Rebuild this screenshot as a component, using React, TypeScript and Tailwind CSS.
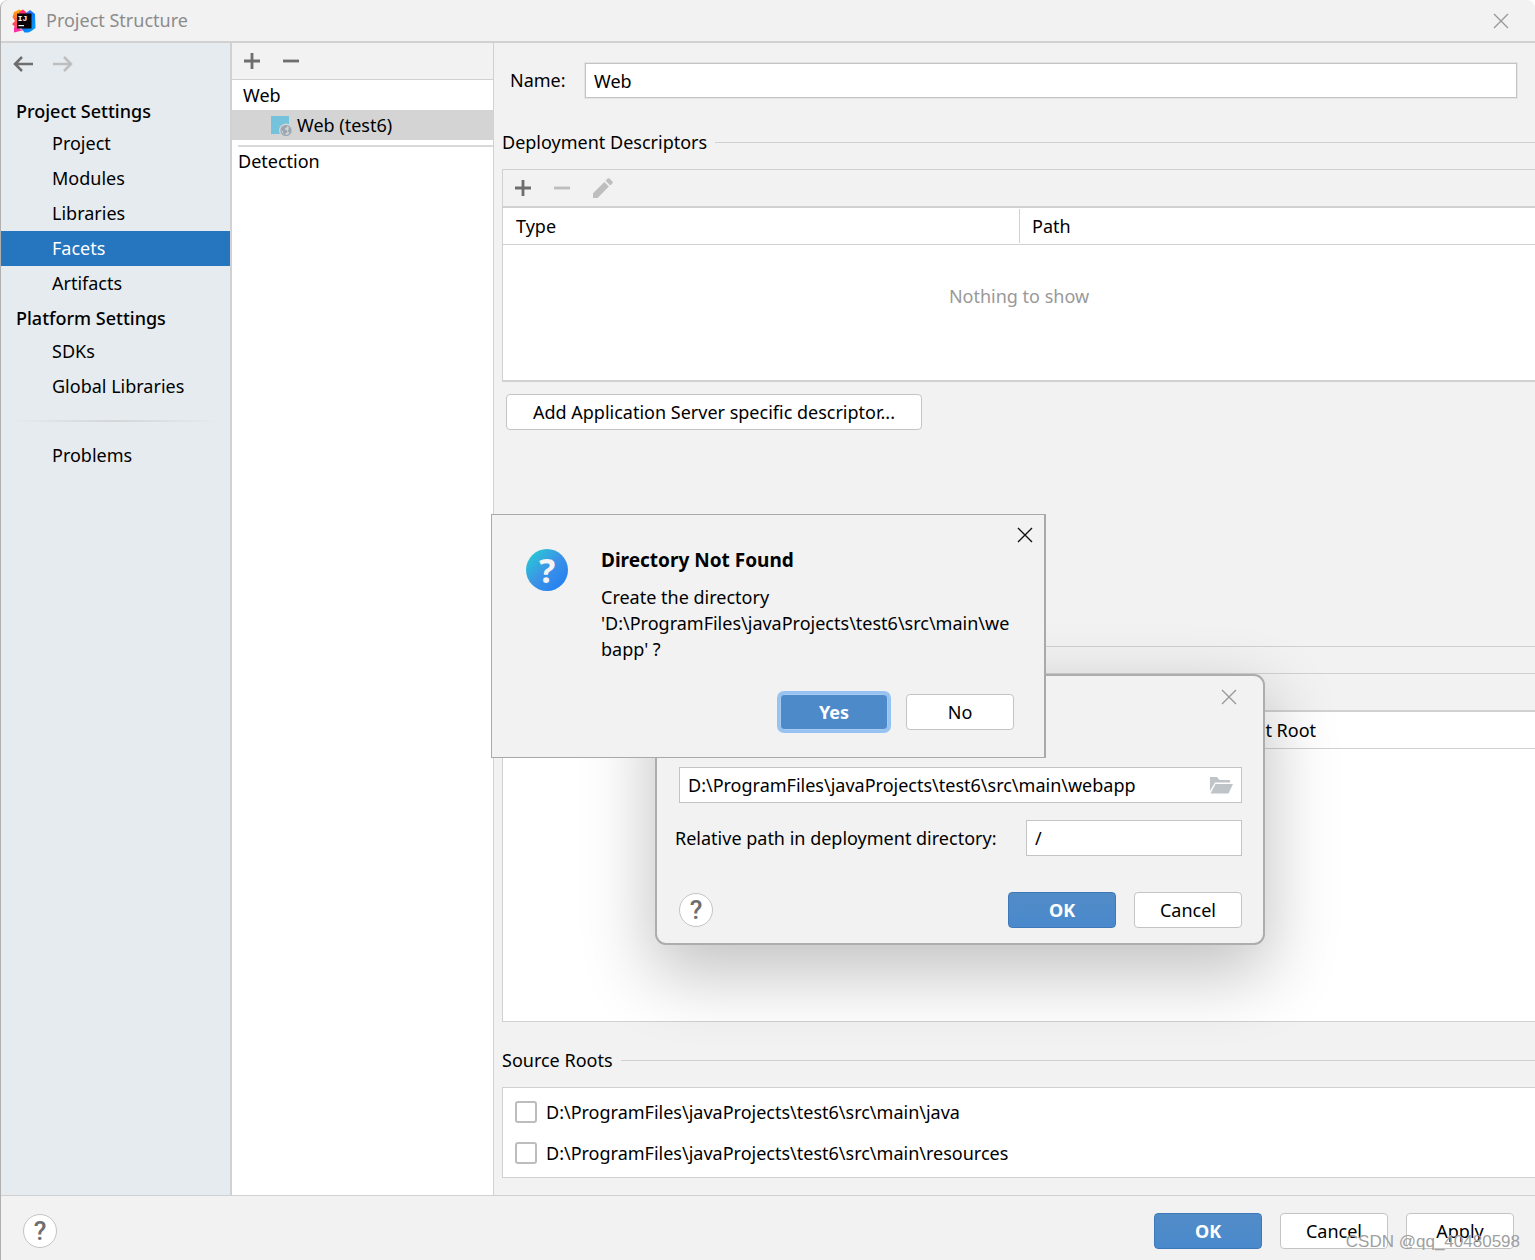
import { useState } from "react";
import type { ReactNode } from "react";

const projectSettings = ["Project", "Modules", "Libraries", "Facets", "Artifacts"];
const platformSettings = ["SDKs", "Global Libraries"];
const sourceRoots = [
  "D:\\ProgramFiles\\javaProjects\\test6\\src\\main\\java",
  "D:\\ProgramFiles\\javaProjects\\test6\\src\\main\\resources",
];

function IdeaLogo() {
  return (
    <svg width="24" height="24" viewBox="0 0 24 24" aria-hidden="true">
      <defs>
        <linearGradient id="ideaLeft" x1="0" y1="0" x2="0" y2="1">
          <stop offset="0" stopColor="#fdb60d" />
          <stop offset="0.45" stopColor="#ff5a3c" />
          <stop offset="1" stopColor="#fe2ea0" />
        </linearGradient>
        <linearGradient id="ideaRight" x1="0" y1="0" x2="1" y2="1">
          <stop offset="0" stopColor="#6b57ff" />
          <stop offset="0.5" stopColor="#087cfa" />
          <stop offset="1" stopColor="#07a5f5" />
        </linearGradient>
      </defs>
      <path d="M2 3l5-2.500 5 2 1 8-6 10-5 2.500 1-5-3-3 3-3-2.500-4z" fill="url(#ideaLeft)" />
      <path d="M7 3l4-2.500L14 3l1 3H8z" fill="#fe2d6b" />
      <path d="M14 4l4-3 5 4 .5 14-4 3-3 1.500h-4l-3-4z" fill="url(#ideaRight)" />
      <path d="M2 18l5 2 5 1-10 2.500z" fill="#fe2ea0" />
      <rect x="5" y="4.500" width="14.500" height="15" fill="#0a0406" />
      <rect x="6.500" y="16" width="5.500" height="1.200" fill="#fff" />
      <text x="5.800" y="12" fontSize="8" fontWeight="700" fontFamily="Liberation Mono, monospace" fill="#fff">
        IJ
      </text>
    </svg>
  );
}

function CloseIcon() {
  return (
    <svg width="16" height="16" viewBox="0 0 16 16" stroke="currentColor" strokeWidth="1.400" aria-hidden="true">
      <path d="M1 1l14 14M15 1L1 15" />
    </svg>
  );
}

function PlusIcon() {
  return (
    <svg width="16" height="16" viewBox="0 0 16 16" fill="currentColor" aria-hidden="true">
      <path d="M6.600 0h2.800v6.600H16v2.800H9.400V16H6.600V9.400H0V6.600h6.600z" />
    </svg>
  );
}

function MinusIcon() {
  return (
    <svg width="16" height="16" viewBox="0 0 16 16" fill="currentColor" aria-hidden="true">
      <path d="M0 6.600h16v2.800H0z" />
    </svg>
  );
}

function ArrowIcon({ className }: { className?: string }) {
  return (
    <svg width="20" height="16" viewBox="0 0 20 16" fill="none" stroke="currentColor" strokeWidth="2.500" className={className} aria-hidden="true">
      <path d="M20 8H2M9 1L2 8l7 7" />
    </svg>
  );
}

function PencilIcon() {
  return (
    <svg width="20" height="20" viewBox="0 0 20 20" fill="currentColor" aria-hidden="true">
      <path d="M0 15.300L11.300 4l4.600 4.600L4.600 20H0zM12.600 2.700L14.700.6q.9-.9 1.800 0l2.900 2.900q.9.9 0 1.800l-2.100 2.100z" />
    </svg>
  );
}

function FacetIcon() {
  return (
    <svg width="22" height="22" viewBox="0 0 22 22" aria-hidden="true">
      <path d="M0 2h18v18H0z" fill="#74c2dc" />
      <circle cx="15" cy="16.500" r="7" fill="#d4d4d4" />
      <circle cx="15" cy="16.500" r="5" fill="#d4d4d4" stroke="#9aa7b0" strokeWidth="1.200" />
      <path d="M10 15.500l2-3.500 3.500-.5.8 1.500-2 1.200-.6 1.300 2.300.8.500 1.700-2 1.500-.3 1.800-1.700-1.300-.5-2.500z" fill="#9aa7b0" />
      <path d="M17.800 13.200l2 2v2.300l-1.500 1.500-1.300-1.800z" fill="#9aa7b0" />
    </svg>
  );
}

function FolderIcon() {
  return (
    <svg width="24" height="18" viewBox="0 0 24 18" fill="#bfc4c9" aria-hidden="true">
      <path d="M1 1h7l2.500 3H21v2.500H6L1 15z" />
      <path d="M6.500 8H24l-4.500 9.500H1.500z" />
    </svg>
  );
}

function Button({ children, primary = false, focused = false }: { children: ReactNode; primary?: boolean; focused?: boolean }) {
  const base = "h-9 w-[108px] rounded-[4px] border leading-6";
  if (focused) {
    return (
      <button className={`${base} border-[#a8c9f0] bg-[#4d8aca] font-bold text-white ring-3 ring-[#97c3f3]`}>{children}</button>
    );
  }
  if (primary) {
    return (
      <button className={`${base} border-[#3f78b8] bg-linear-to-b from-[#528cc7] to-[#4989cc] font-bold text-white`}>{children}</button>
    );
  }
  return <button className={`${base} border-[#c4c4c4] bg-white`}>{children}</button>;
}

function HelpButton() {
  return (
    <button
      aria-label="Help"
      className="flex size-[34px] items-center justify-center rounded-full border border-[#c4c4c4] bg-white font-[Roboto,sans-serif] text-[26px] font-medium text-[#6e6e6e]"
    >
      ?
    </button>
  );
}

function SectionTitle({ children }: { children?: ReactNode }) {
  return (
    <div className="flex h-6 items-center gap-2">
      {children && <h2 className="leading-6">{children}</h2>}
      <div className="h-px flex-1 bg-[#d1d1d1]" />
    </div>
  );
}

function EditorToolbar() {
  return (
    <div className="flex h-[38px] items-center gap-[23px] border-b-2 border-[#d1d1d1] bg-[#f2f2f2] pl-3 text-[#bebebe]">
      <button aria-label="Add" className="text-[#6e6e6e]">
        <PlusIcon />
      </button>
      <button aria-label="Remove">
        <MinusIcon />
      </button>
      <button aria-label="Edit">
        <PencilIcon />
      </button>
    </div>
  );
}

function EditorTable({ columns, message }: { columns: string[]; message?: string }) {
  return (
    <table className="w-full table-fixed">
      <thead>
        <tr className="border-b border-[#d1d1d1]">
          {columns.map((column, index) => (
            <th key={column} className="pt-px pb-px text-left font-normal">
              <div className={index > 0 ? "border-l border-[#d1d1d1] pl-3 leading-[34px]" : "pl-[13px] leading-[34px]"}>
                {column}
              </div>
            </th>
          ))}
        </tr>
      </thead>
      {message && (
        <tbody>
          <tr>
            <td colSpan={columns.length} className="pt-[39px] text-center leading-6 text-[#999999]">
              {message}
            </td>
          </tr>
        </tbody>
      )}
    </table>
  );
}

function SettingsGroup({ items, selected, onSelect }: { items: string[]; selected: string; onSelect: (item: string) => void }) {
  return (
    <ul>
      {items.map((item) => (
        <li key={item}>
          <button
            onClick={() => onSelect(item)}
            className={
              item === selected
                ? "block h-[35px] w-full bg-[#2675bf] pl-[51px] text-left text-white"
                : "block h-[35px] w-full pl-[51px] text-left"
            }
          >
            {item}
          </button>
        </li>
      ))}
    </ul>
  );
}

function Sidebar() {
  const [selected, setSelected] = useState("Facets");

  return (
    <nav className="w-[231px] shrink-0 border-r-2 border-[#d1d1d1] bg-[#e6ebef]">
      <div className="flex h-[42px] items-center gap-5 pl-3">
        <button aria-label="Back" className="text-[#6e6e6e]">
          <ArrowIcon />
        </button>
        <button aria-label="Forward" className="text-[#bebebe]">
          <ArrowIcon className="rotate-180" />
        </button>
      </div>
      <h2 className="mt-2 h-[33px] pl-[15px] leading-9 font-medium">Project Settings</h2>
      <SettingsGroup items={projectSettings} selected={selected} onSelect={setSelected} />
      <h2 className="h-[33px] pl-[15px] leading-[34px] font-medium">Platform Settings</h2>
      <SettingsGroup items={platformSettings} selected={selected} onSelect={setSelected} />
      <div className="mx-3 my-4 h-0.5 bg-linear-to-r from-transparent via-[#d4d6d8] to-transparent" />
      <SettingsGroup items={["Problems"]} selected={selected} onSelect={setSelected} />
    </nav>
  );
}

function FacetTree() {
  return (
    <section className="w-[262px] shrink-0 border-r border-[#d1d1d1] bg-white">
      <div className="flex h-[37px] items-center gap-[23px] border-b border-[#d1d1d1] bg-[#f2f2f2] pl-3 text-[#6e6e6e]">
        <button aria-label="Add">
          <PlusIcon />
        </button>
        <button aria-label="Remove">
          <MinusIcon />
        </button>
      </div>
      <ul>
        <li className="h-[30px] pl-[11px] leading-[30px]">Web</li>
        <li className="flex h-[30px] items-center gap-1 bg-[#d4d4d4] pl-[39px]">
          <FacetIcon />
          Web (test6)
        </li>
        <li className="mt-[5px] ml-1.5 border-t-2 border-[#d9d9d9] leading-7">Detection</li>
      </ul>
    </section>
  );
}

function FacetEditor() {
  return (
    <main className="min-w-0 flex-1 pt-5 pb-4 pl-2">
      <div className="flex items-center pr-[18px] pl-2">
        <label htmlFor="facet-name" className="w-[75px]">
          Name:
        </label>
        <input
          id="facet-name"
          defaultValue="Web"
          className="h-[35px] min-w-0 flex-1 border border-[#c4c4c4] bg-white px-2 ring-1 ring-[#e4e4e4]"
        />
      </div>

      <div className="mt-8">
        <SectionTitle>Deployment Descriptors</SectionTitle>
      </div>
      <div className="mt-[15px] h-[213px] border-t border-b-2 border-l border-[#d1d1d1] bg-white">
        <EditorToolbar />
        <EditorTable columns={["Type", "Path"]} message="Nothing to show" />
      </div>
      <button className="mt-3 ml-1 h-9 w-[416px] rounded-[4px] border border-[#c4c4c4] bg-white">
        Add Application Server specific descriptor...
      </button>

      <div className="mt-[204px]">
        <SectionTitle />
      </div>
      <div className="mt-[15px] h-[349px] border-t border-b border-l border-[#d1d1d1] bg-white">
        <EditorToolbar />
        <EditorTable columns={["Web Resource Directory", "Path Relative to Deployment Root"]} />
      </div>

      <div className="mt-[26px]">
        <SectionTitle>Source Roots</SectionTitle>
      </div>
      <div className="mt-[15px] flex flex-col gap-[17px] border-t border-b border-l border-[#d1d1d1] bg-white py-3 pl-3">
        {sourceRoots.map((root) => (
          <label key={root} className="flex items-center gap-[9px] leading-6">
            <input type="checkbox" className="size-[22px] appearance-none rounded-[3px] border-2 border-[#bdbdbd] bg-white" />
            {root}
          </label>
        ))}
      </div>
    </main>
  );
}

function ResourcePathDialog() {
  return (
    <div
      role="dialog"
      aria-label="Web Resource Directory Path"
      className="absolute top-[674px] left-[654px] w-[610px] rounded-[11px] border-2 border-[#adadad] bg-[#f2f2f2] pr-[21px] pb-[15px] pl-[22px] shadow-[0_26px_70px_4px_rgba(0,0,0,0.24)]"
    >
      <div className="flex h-[42px] items-center justify-end pr-[5px]">
        <button aria-label="Close" className="text-[#999999]">
          <CloseIcon />
        </button>
      </div>
      <label htmlFor="resource-path" className="mt-4 block leading-6">
        Web resource directory path:
      </label>
      <div className="mt-[9px] flex h-9 items-center border border-[#c4c4c4] bg-white pr-2">
        <input
          id="resource-path"
          defaultValue={"D:\\ProgramFiles\\javaProjects\\test6\\src\\main\\webapp"}
          className="min-w-0 flex-1 px-2"
        />
        <button aria-label="Browse">
          <FolderIcon />
        </button>
      </div>
      <div className="mt-[17px] -ml-1 flex items-center justify-between">
        <label htmlFor="relative-path">Relative path in deployment directory:</label>
        <input id="relative-path" defaultValue="/" className="h-9 w-[216px] border border-[#c4c4c4] bg-white px-2" />
      </div>
      <div className="mt-9 flex items-center gap-[18px]">
        <div className="flex-1">
          <HelpButton />
        </div>
        <Button primary>OK</Button>
        <Button>Cancel</Button>
      </div>
    </div>
  );
}

function DirectoryNotFoundDialog() {
  return (
    <div
      role="alertdialog"
      aria-labelledby="not-found-title"
      className="absolute top-[514px] left-[490px] w-[555px] border border-r-2 border-[#a9a9a9] bg-[#f2f2f2] pt-8 pr-[30px] pb-[27px] pl-[34px]"
    >
      <button aria-label="Close" className="absolute top-3 right-[11px] text-[#111111]">
        <CloseIcon />
      </button>
      <div className="flex gap-[33px]">
        <div className="mt-0.5 flex size-[42px] shrink-0 items-center justify-center rounded-full bg-linear-to-br from-[#21d3cf] via-[#3b93e6] to-[#1a7af5] text-[34px] font-bold text-[#f4f4f4]">
          ?
        </div>
        <div>
          <h2 id="not-found-title" className="text-[19px] leading-[26px] font-bold">
            Directory Not Found
          </h2>
          <p className="mt-[11px] leading-[26px] whitespace-nowrap">
            Create the directory
            <br />
            'D:\ProgramFiles\javaProjects\test6\src\main\we
            <br />
            bapp' ?
          </p>
        </div>
      </div>
      <div className="mt-8 flex justify-end gap-[18px]">
        <Button focused>Yes</Button>
        <Button>No</Button>
      </div>
    </div>
  );
}

function App() {
  return (
    <div className="relative flex min-h-screen flex-col overflow-hidden rounded-t-lg border-l border-[#b0b0b0] bg-[#f2f2f2] font-['Noto_Sans','Noto_Sans_CJK_SC',sans-serif] text-[18px] text-black">
      <header className="flex h-[43px] items-center gap-2.5 border-b-2 border-[#d1d1d1] pr-[26px] pl-[11px]">
        <IdeaLogo />
        <h1 className="flex-1 text-[#8c8c8c]">Project Structure</h1>
        <button aria-label="Close" className="text-[#999999]">
          <CloseIcon />
        </button>
      </header>

      <div className="flex flex-1">
        <Sidebar />
        <FacetTree />
        <FacetEditor />
      </div>

      <footer className="relative flex h-[65px] items-center gap-[18px] border-t border-[#d1d1d1] pt-1.5 pr-[21px] pl-[22px]">
        <div className="flex-1">
          <HelpButton />
        </div>
        <Button primary>OK</Button>
        <Button>Cancel</Button>
        <Button>Apply</Button>
        <span className="absolute right-[15px] bottom-1.5 font-['Liberation_Sans',sans-serif] text-[17px] leading-6 text-[#a0a0a0]">
          CSDN @qq_40480598
        </span>
      </footer>

      <ResourcePathDialog />
      <DirectoryNotFoundDialog />
    </div>
  );
}

export default App;
